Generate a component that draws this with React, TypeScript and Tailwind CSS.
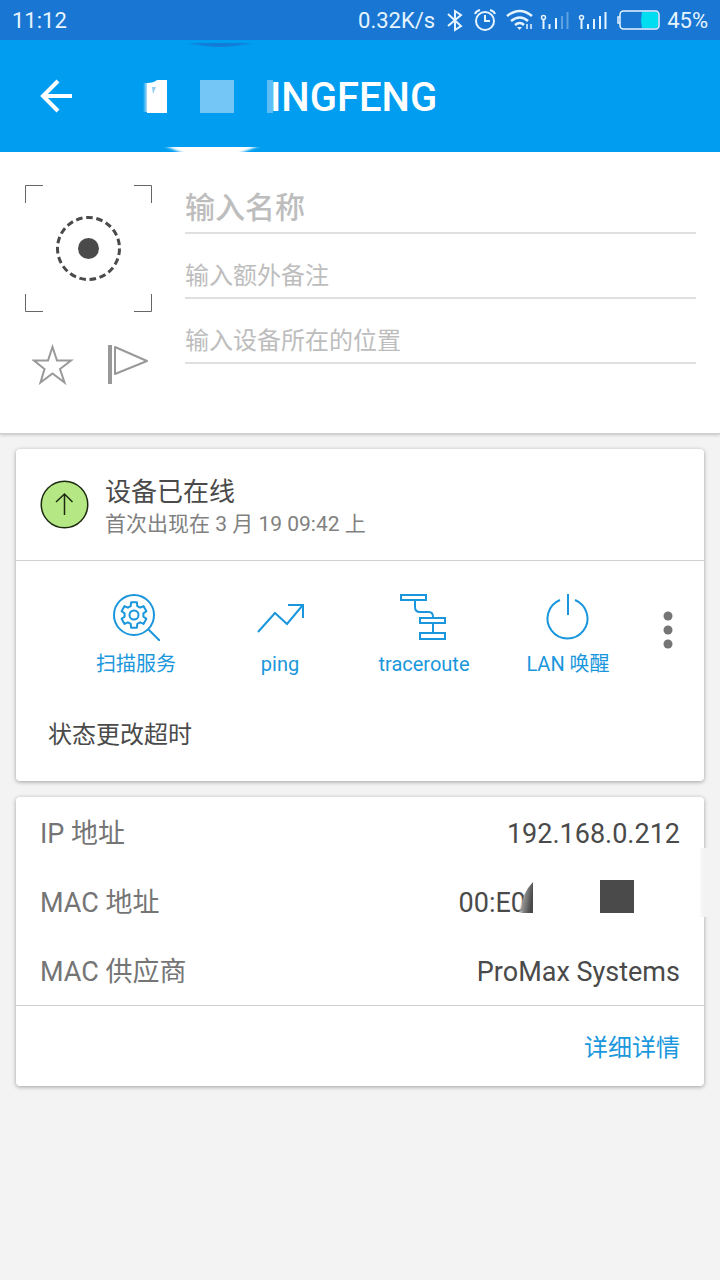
import type { InputHTMLAttributes, ReactNode } from 'react';

interface FieldProps extends InputHTMLAttributes<HTMLInputElement> {
  label: string;
}

function Field({ label, className, ...rest }: FieldProps) {
  return (
    <input
      type="text"
      aria-label={label}
      placeholder={label}
      className={`block w-full border-b-2 border-[#e0e0e0] bg-transparent text-[#4a4a4a] outline-none placeholder:text-[#bdbdbd] ${className}`}
      {...rest}
    />
  );
}

function Action({ label, children }: { label: string; children: ReactNode }) {
  return (
    <button type="button" className="flex flex-1 flex-col items-center gap-2 text-xl leading-[30px] text-[#1a97dc]">
      <svg width="48" height="48" viewBox="0 0 48 48" fill="none" stroke="currentColor" strokeWidth="2" aria-hidden="true">
        {children}
      </svg>
      <span className="whitespace-nowrap">{label}</span>
    </button>
  );
}

function StatusBar() {
  return (
    <div className="flex h-10 items-center justify-between bg-[#1976d2] px-3 pt-0.5 text-[22px] leading-9 text-[#e6f4ff]">
      <span>11:12</span>
      <div className="flex items-center">
        <span>0.32K/s</span>
        <svg className="ml-2" width="224" height="28" viewBox="443 7 224 28" fill="none" stroke="currentColor" strokeWidth="2" aria-hidden="true">
          <path d="M448 14l13 12-6 4V11l6 4-13 11" />
          <circle cx="485" cy="21" r="9" />
          <path d="M485 15v6h5M475 14q1-3 5-4M495 14q-1-3-5-4" />
          <path d="M507 16q13-10 25 0M511 21q9-7 17 0M515 25q5-4 9 0" strokeWidth="2.5" />
          <path d="M517 27h5l-2.5 3z" fill="currentColor" stroke="none" />
          <path d="M527 24v5M531 24v5" strokeWidth="1.5" />
          <circle cx="543.5" cy="17.5" r="2" strokeWidth="1.5" />
          <path d="M543.5 20v9M549.5 24v5M556 18v11" />
          <path d="M562 16v13M567.5 12v17" strokeOpacity="0.35" />
          <circle cx="581.5" cy="17.5" r="2" strokeWidth="1.5" />
          <path d="M581.5 20v9M588 24v5M594 19v10M600 16v13M605.5 12v17" />
          <path d="M642 12h14q2 0 2 2v12q0 2-2 2h-14l-1-7z" fill="#00dcf0" stroke="none" />
          <rect x="620" y="11" width="39" height="18" rx="3.5" strokeWidth="1.5" />
          <path d="M620 17h-2v6h2" strokeWidth="1.5" />
        </svg>
        <span>45%</span>
      </div>
    </div>
  );
}

function AppBar() {
  return (
    <header className="relative flex h-28 items-center bg-[#009df0] pl-9 text-white">
      <button type="button" aria-label="Back" className="flex h-10 w-10 items-center justify-center">
        <svg width="40" height="40" viewBox="0 0 40 40" fill="none" stroke="currentColor" strokeWidth="4">
          <path d="M36 20H7M22 5L7 20l15 15" />
        </svg>
      </button>
      <svg className="ml-16" width="130" height="34" viewBox="0 0 130 34" overflow="visible" aria-hidden="true">
        <defs>
          <linearGradient id="fade">
            <stop offset="0" stopColor="#fff" stopOpacity="0" />
            <stop offset="1" stopColor="#fff" />
          </linearGradient>
        </defs>
        <path d="M3 4h6v29H3z" fill="url(#fade)" />
        <path d="M7 4q7 0 10-3h10v33H7z" fill="#fff" />
        <path d="M12 8h4l-3 7z" fill="#90cdf4" />
        <path d="M60 1h34v33H60z" fill="#74c6f7" />
        <path d="M127 1h6v33h-6z" fill="#74c6f7" opacity="0.8" />
      </svg>
      <h1 className="pt-1 text-[40px] leading-none font-medium">INGFENG</h1>
      <svg className="absolute top-0 left-40" width="120" height="112" viewBox="0 0 120 112" aria-hidden="true">
        <defs>
          <filter id="soft" x="-20%" y="-60%" width="140%" height="220%">
            <feGaussianBlur stdDeviation="3 0.6" />
          </filter>
        </defs>
        <path d="M30 3h60q-14 4-30 4T30 3z" fill="#1976d2" opacity="0.8" filter="url(#soft)" />
        <path d="M8 107h88q-9 4-20 7H26q-10-3-18-7z" fill="#fff" filter="url(#soft)" />
      </svg>
    </header>
  );
}

function DeviceForm() {
  return (
    <section className="flex border-b border-[#cfcfcf] bg-white pt-8 pr-6 pb-12 pl-6 shadow-[0_1px_3px_rgba(0,0,0,0.2)]">
      <div className="mr-8 w-[129px] shrink-0">
        <button type="button" aria-label="Device icon" className="block">
          <svg width="129" height="129" viewBox="0 0 129 129" fill="none" stroke="#4a4a4a">
            <path d="M19 1.5H1.5V19M110 1.5h17.5V19M1.5 110v17.5H19M127.5 110v17.5H110" stroke="#666" />
            <circle cx="64.5" cy="64.5" r="31" strokeWidth="3" strokeDasharray="6.6 3.65" strokeLinecap="butt" />
            <circle cx="64.5" cy="64.5" r="10.5" fill="#4a4a4a" stroke="none" />
          </svg>
        </button>
        <div className="mt-7 flex justify-between">
          <button type="button" aria-label="Favorite" className="ml-2">
            <svg width="42" height="44" viewBox="0 0 42 44" fill="none" stroke="#999" strokeWidth="2">
              <path d="M20.5 6l4.5 13.5h14L28 28l4.5 13.5-12-9-12 9L12.500 28 2 19.500h14z" />
            </svg>
          </button>
          <button type="button" aria-label="Flag" className="mr-1">
            <svg width="42" height="44" viewBox="0 0 42 44" fill="none" stroke="#999" strokeWidth="2" strokeLinejoin="round">
              <path d="M3 4v39" strokeWidth="4" />
              <path d="M8 6l32 14L8 33z" />
            </svg>
          </button>
        </div>
      </div>
      <div className="min-w-0 flex-1">
        <Field label="输入名称" className="h-[50px] pb-0.5 text-[30px] font-medium" />
        <Field label="输入额外备注" className="mt-4 h-[49px] pt-1 text-2xl" />
        <Field label="输入设备所在的位置" className="mt-4 h-[49px] pt-1 text-2xl" />
      </div>
    </section>
  );
}

function StatusCard() {
  return (
    <section className="mx-4 mt-[15px] rounded bg-white pb-[30px] shadow-[0_1px_4px_rgba(0,0,0,0.35)]">
      <div className="flex items-start border-b border-[#d0d0d0] px-6 pt-[31px] pb-5">
        <svg width="49" height="49" viewBox="0 0 49 49" fill="none" stroke="#1c2a10" strokeWidth="1.5" aria-hidden="true">
          <circle cx="24.5" cy="24.5" r="23.25" fill="#b5e784" />
          <path d="M24.5 35V14M16 22l8.5-8 8 8" />
        </svg>
        <div className="-mt-1 ml-4">
          <h2 className="text-[26px] leading-8 text-[#4a4a4a]">设备已在线</h2>
          <p className="text-[21px] leading-8 text-[#808080]">首次出现在 3 月 19 09:42 上</p>
        </div>
      </div>
      <div className="flex items-start pt-8 pr-2 pl-12">
        <Action label="扫描服务">
          <circle cx="22" cy="22" r="20" />
          <path d="M36 36l12 12" />
          <circle cx="22" cy="22" r="4.5" />
          <path
            d="M18.7 13.1L19.1 9.3h5.8l.4 3.8 2.8 1.6 3.4-1.6 2.9 5.1-3 2.2v3.2l3 2.2-2.9 5.1-3.4-1.6-2.8 1.6-.4 3.8h-5.8l-.4-3.8-2.8-1.6-3.4 1.6-2.9-5.1 3-2.2v-3.2l-3-2.2 2.9-5.1 3.4 1.6z"
            strokeLinejoin="round"
          />
        </Action>
        <Action label="ping">
          <path d="M2 39l17-19 12 11 15-18M32 12h15v13" />
        </Action>
        <Action label="traceroute">
          <path d="M1 2h25v5H1zM20 25h25v5H20zM20 40h25v6H20zM15 7v7q0 5 5 5h9q4 0 4 5M33 30v10" />
        </Action>
        <Action label="LAN 唤醒">
          <path d="M16 7a20 20 0 1 0 15 0M24 1v21" />
        </Action>
        <button type="button" aria-label="More" className="mt-4 flex w-14 justify-center">
          <svg width="12" height="42" viewBox="0 0 12 42" fill="#757575">
            <circle cx="6" cy="7" r="4.5" />
            <circle cx="6" cy="21" r="4.5" />
            <circle cx="6" cy="35" r="4.5" />
          </svg>
        </button>
      </div>
      <p className="mt-10 px-8 text-2xl leading-8 text-[#4a4a4a]">状态更改超时</p>
    </section>
  );
}

function NetworkCard() {
  return (
    <section className="relative mx-4 mt-4 rounded bg-white shadow-[0_1px_4px_rgba(0,0,0,0.35)]">
      <dl className="border-b border-[#d0d0d0] pt-[3px] text-[27px] leading-[69px] text-[#4a4a4a]">
        <div className="flex h-[69px] justify-between px-6">
          <dt className="text-[#757575]">IP 地址</dt>
          <dd>192.168.0.212</dd>
        </div>
        <div className="flex h-[69px] justify-between px-6">
          <dt className="text-[#757575]">MAC 地址</dt>
          <dd className="flex pr-[46px]">
            <span>00:E0</span>
            <svg className="-ml-3" width="120" height="69" viewBox="0 0 120 69" aria-hidden="true">
              <defs>
                <linearGradient id="smear" x1="0" y1="0.3" x2="0.9" y2="0.6">
                  <stop offset="0" stopColor="#fff" stopOpacity="0" />
                  <stop offset="0.5" stopColor="#888" />
                  <stop offset="1" stopColor="#4a4a4a" />
                </linearGradient>
              </defs>
              <path d="M5 44q3-20 14-31v31z" fill="url(#smear)" />
              <path d="M86 11h34v33H86z" fill="#4a4a4a" />
            </svg>
          </dd>
        </div>
        <div className="flex h-[67px] justify-between px-6">
          <dt className="text-[#757575]">MAC 供应商</dt>
          <dd>ProMax Systems</dd>
        </div>
      </dl>
      <div className="flex h-20 items-center justify-end px-6 pt-1">
        <a href="#details" className="text-2xl text-[#1a97dc]">
          详细详情
        </a>
      </div>
      <div className="absolute top-[51px] -right-1 h-[69px] w-2 bg-linear-to-r from-[#fafafa] to-[#f3f3f3] to-50%" />
    </section>
  );
}

export default function App() {
  return (
    <div className="min-h-screen bg-[#f3f3f3] pb-4 font-[Roboto,'Noto_Sans_CJK_SC',sans-serif]">
      <StatusBar />
      <AppBar />
      <main>
        <DeviceForm />
        <StatusCard />
        <NetworkCard />
      </main>
    </div>
  );
}
